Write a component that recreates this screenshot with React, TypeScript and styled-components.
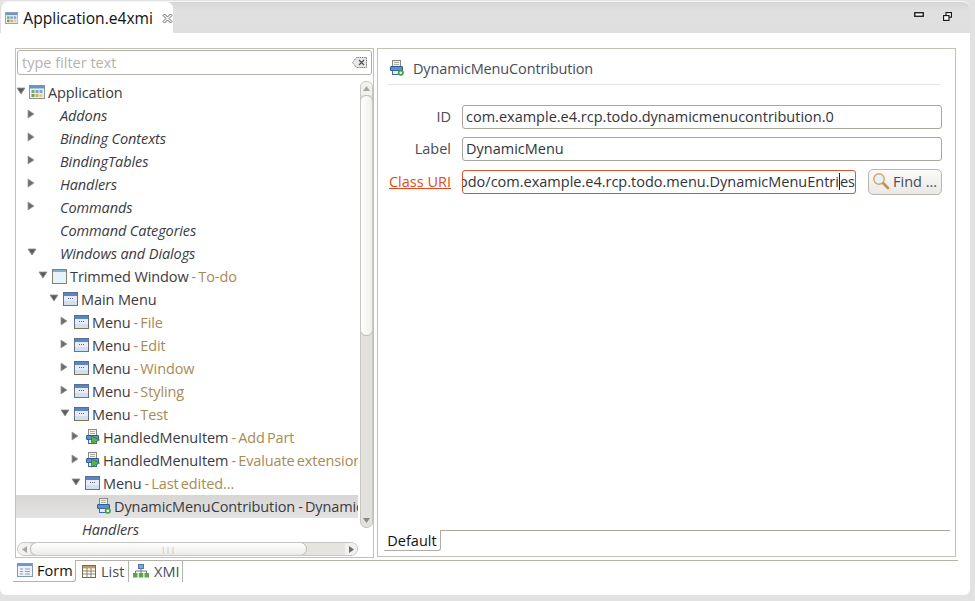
import React from "react";
import styled, { createGlobalStyle } from "styled-components";

const Global = createGlobalStyle`
  html, body { margin: 0; padding: 0; background: #e2e2e2; }
  body { font-family: "Open Sans", "Noto Sans", "Liberation Sans", sans-serif; font-size: 14.5px; color: #33333b; }
  * { box-sizing: border-box; }
`;

const Page = styled.div`
  width: 975px; height: 601px; overflow: hidden; background: #e2e2e2;
  padding: 1px 5px 6px 0; display: flex;
`;
const Editor = styled.div`
  flex: 1; display: flex; flex-direction: column; background: #fff;
  border-radius: 6px 8px 6px 6px; border-top: 1px solid #f4f4f4; overflow: hidden;
`;
const TabStrip = styled.div`
  height: 31px; flex: none; display: flex; align-items: stretch; justify-content: space-between;
  background: linear-gradient(#d6d6d6, #e0e0e0 30%, #dfdfdf);
`;
const EditorTab = styled.div`
  width: 172px; margin-left: 1px; background: #fff; border-radius: 6px 6px 0 0;
  display: flex; align-items: center; padding: 1px 0 0 4px; gap: 5px; font-size: 15.6px; color: #101010;
`;
const CloseBtn = styled.span`margin-left: 4px; display: flex;`;
const WinButtons = styled.div`display: flex; align-items: flex-start; gap: 19px; padding: 10px 18px 0 0;`;

const Body = styled.div`
  flex: 1; min-height: 0; display: flex; flex-direction: column; padding-top: 15px;
`;
const Panes = styled.div`
  height: 510px; flex: none; display: flex; gap: 3px; padding-left: 15px;
`;
const LeftPane = styled.div`
  width: 359px; flex: none; border: 1px solid #c3c0b8; display: flex; flex-direction: column;
`;
const FilterBox = styled.div`
  margin: 1px 0 0 1px; width: 355px; height: 25px; flex: none; border: 1px solid #b3b0a9; border-radius: 3px;
  display: flex; align-items: center; justify-content: space-between; padding: 0 4px 1px; color: #b5b2ad;
`;
const TreeArea = styled.div`
  flex: 1; min-height: 0; margin-top: 6px; display: flex;
`;
const Tree = styled.div`flex: 1; min-width: 0; overflow: hidden;`;
const Row = styled.div<{ $depth: number; $selected?: boolean }>`
  height: 23px; display: flex; align-items: center; white-space: nowrap;
  padding-left: ${(p) => 1 + p.$depth * 11}px;
  background: ${(p) => (p.$selected ? "linear-gradient(#d8d7d5, #e4e3e1)" : "transparent")};
  color: #3a3a42;
`;
const Toggle = styled.span`width: 13px; flex: none; display: flex; margin: -3px 0 0 -1px;`;
const IconSlot = styled.span`width: 19px; flex: none; display: flex; margin-top: -1px;`;
const Name = styled.span<{ $italic?: boolean }>`
  font-style: ${(p) => (p.$italic ? "italic" : "normal")};
  margin-left: ${(p) => (p.$italic ? 1 : 0)}px;
  letter-spacing: -0.1px;
`;
const Deco = styled.span<{ $plain?: boolean }>`
  color: ${(p) => (p.$plain ? "#3a3a42" : "#a78a55")};
  letter-spacing: -0.1px; word-spacing: -1.5px; margin-left: 3px;
`;

const VScroll = styled.div`
  width: 15px; flex: none; background: #fff; padding-left: 2px; display: flex; flex-direction: column;
`;
const VTrack = styled.div`
  height: 447px; background: #e3e1de; border: 1px solid #c8c6c1; border-radius: 6px; display: flex; flex-direction: column; overflow: hidden;
`;
const VCap = styled.div`
  height: 13px; flex: none; display: flex; align-items: center; justify-content: center; background: #f2f1ef;
`;
const VThumb = styled.div`
  height: 241px; flex: none; margin: 0 -1px; border: 1px solid #bdbbb6; border-radius: 6px; background: linear-gradient(90deg, #fff, #f0efed);
`;
const VBottom = styled.div`height: 13px; flex: none; display: flex; align-items: center; justify-content: center;`;
const HScroll = styled.div`
  height: 14px; flex: none; margin: 1px 0 1px 1px; width: 341px; border: 1px solid #c8c6c1; border-radius: 7px;
  background: #e6e4e1; display: flex; align-items: stretch; overflow: hidden;
`;
const HCap = styled.div`width: 12px; flex: none; display: flex; align-items: center; justify-content: center; background: #f2f1ef;`;
const HThumb = styled.div`
  width: 277px; flex: none; margin: -1px 0; border: 1px solid #bdbbb6; border-radius: 7px;
  background: linear-gradient(#fff, #ecebe9); display: flex; align-items: center; justify-content: center;
`;
const HRest = styled.div`flex: 1;`;
const Grip = styled.span`color: #a5a3a0; font-size: 7px; letter-spacing: 1px; line-height: 1;`;

const RightPane = styled.div`
  width: 579px; flex: none; border: 1px solid #c3c0b8; display: flex; flex-direction: column; padding: 0 15px 0 6px;
  margin-bottom: 1px;
`;
const FormHead = styled.div`
  height: 36px; flex: none; margin-left: 4px; display: flex; align-items: center; gap: 9px; border-bottom: 1px solid #e4e4e4;
  color: #4b4b58; padding: 3px 0 0 0; width: 552px; letter-spacing: -0.15px;
`;
const Fields = styled.div`
  margin-top: 20px; display: grid; grid-template-columns: 68px 480px; column-gap: 11px; row-gap: 8px; align-items: center; margin-left: -1px;
`;
const FieldLabel = styled.span`text-align: right; color: #4b4b50; padding-bottom: 2px;`;
const LinkLabel = styled.a`
  text-align: right; color: #e24a1c; text-decoration: underline; justify-self: end; padding-bottom: 1px;
`;
const TextBox = styled.div<{ $error?: boolean }>`
  height: 24px; border: 1px solid ${(p) => (p.$error ? "#d9532c" : "#a9a6a0")}; border-radius: 3px; background: #fff;
  display: flex; align-items: center; padding: 0 ${(p) => (p.$error ? 0 : 3)}px 2px 3px; white-space: nowrap; overflow: hidden; color: #33333b; min-width: 0;
  justify-content: ${(p) => (p.$error ? "flex-end" : "flex-start")};
`;
const UriRow = styled.div`display: flex; align-items: center; justify-content: space-between;`;
const UriBox = styled(TextBox)`width: 394px; flex: none;`;
const Caret = styled.span`display: inline-block; width: 0; height: 17px; border-left: 1px solid #222; vertical-align: -3px;`;
const FindButton = styled.button`
  width: 74px; height: 26px; border: 1px solid #b9b6b0; border-radius: 5px; background: linear-gradient(#fbfbfa, #e9e8e5);
  font: inherit; color: #4b4b58; display: flex; align-items: center; gap: 3px; padding: 0 0 2px 3px; white-space: nowrap;
`;
const Spacer = styled.div`flex: 1;`;
const PageTabs = styled.div`
  height: 21px; flex: none; display: flex; align-items: stretch; margin-bottom: 5px; margin-right: -9px;
`;
const DefaultTab = styled.div`
  width: 57px; border-bottom: 1px solid #b0ada6; border-right: 1px solid #b0ada6; border-radius: 0 0 3px 0; display: flex; align-items: center; justify-content: center; color: #111;
`;
const PageTabRest = styled.div`flex: 1; border-top: 1px solid #aaa79f; margin-right: -1px;`;

const BottomTabs = styled.div`
  margin: 2px 12px 0 13px; height: 22px; flex: none; display: flex; align-items: stretch;
`;
const BottomTab = styled.div<{ $active?: boolean; $w: number; $pad: number; $gap: number }>`
  width: ${(p) => p.$w}px; display: flex; align-items: center; gap: ${(p) => p.$gap}px; padding: 0 0 1px ${(p) => p.$pad}px;
  border-right: 1px solid #b5b2ab; color: ${(p) => (p.$active ? "#111" : "#4b4b58")};
  border-top: ${(p) => (p.$active ? "none" : "1px solid #b5b2ab")};
  border-bottom: ${(p) => (p.$active ? "1px solid #b5b2ab" : "none")};
  border-bottom-right-radius: ${(p) => (p.$active ? 3 : 0)}px;
`;
const BottomRest = styled.div`flex: 1; border-top: 1px solid #b5b2ab;`;

const TriRight = () => (
  <svg width="8" height="10" viewBox="0 0 8 10"><path d="M1 1L7 5L1 9Z" fill="#6c6c6c" stroke="#9a9a9a" strokeWidth=".8" /></svg>
);
const TriDown = () => (
  <svg width="10" height="8" viewBox="0 0 10 8"><path d="M1 1H9L5 7Z" fill="#5c5c5c" stroke="#8e8e8e" strokeWidth=".8" /></svg>
);
const AppIcon = () => (
  <svg width="16" height="14" viewBox="0 0 16 14">
    <rect x=".5" y=".5" width="15" height="13" fill="#e8f0f8" stroke="#7f93a8" />
    <rect x="1" y="1" width="14" height="2.5" fill="#6d93c4" />
    <rect x="2.5" y="5" width="3" height="3" fill="#7fae5c" /><rect x="6.5" y="5" width="3" height="3" fill="#7fa3d8" /><rect x="10.5" y="5" width="3" height="3" fill="#7fa3d8" />
    <rect x="2.5" y="9" width="3" height="3" fill="#6fa84c" /><rect x="6.5" y="9" width="3" height="3" fill="#e0a45a" /><rect x="10.5" y="9" width="3" height="3" fill="#ecd35c" />
  </svg>
);
const WindowIcon = () => (
  <svg width="16" height="15" viewBox="0 0 16 15">
    <rect x="1.5" y=".5" width="14" height="14" fill="#e6f3fb" stroke="#86806f" />
    <rect x="2" y="1" width="13" height="2" fill="#7ab0dc" />
  </svg>
);
const MenuIcon = () => (
  <svg width="16" height="14" viewBox="0 0 16 14">
    <rect x="1.5" y=".5" width="14" height="13" fill="#e9ecf6" stroke="#5a6f90" />
    <rect x="2" y="1" width="13" height="3" fill="#5a86c6" />
    <path d="M6 6.5h5" stroke="#5b6b86" strokeDasharray="1 1" />
    <rect x="2" y="9" width="13" height="4" fill="#cfe0f2" />
    <path d="M1 13.5h15M1 8.5h1M15 8.5h1" stroke="#86734a" />
  </svg>
);
const PrinterBase = () => (
  <>
    <rect x="4.5" y=".5" width="8" height="6" fill="#f2f2ea" stroke="#8a8a80" />
    <path d="M6 2.5h5M6 4.5h5" stroke="#9c9c90" strokeWidth=".8" />
    <rect x="2.5" y="6.5" width="12" height="4" rx=".5" fill="#5f8fce" stroke="#2f5a9a" />
    <rect x="4.5" y="10.5" width="8" height="4" fill="#e4ebf4" stroke="#3f6aa4" />
  </>
);
const HandledIcon = () => (
  <svg width="16" height="16" viewBox="0 0 16 16">
    <PrinterBase />
    <path d="M7.5 7L15.5 11L7.5 15Z" fill="#5cb04a" stroke="#2f7d38" strokeWidth=".8" />
  </svg>
);
const DynamicIcon = () => (
  <svg width="16" height="16" viewBox="0 0 16 16">
    <PrinterBase />
    <circle cx="12.8" cy="12.8" r="2.2" fill="#fff" stroke="#3f9a4a" strokeWidth="1.6" />
  </svg>
);
const CloseIcon = () => (
  <svg width="11" height="11" viewBox="0 0 11 11">
    <path d="M1 2.5L2.5 1L5.5 4L8.5 1L10 2.5L7 5.5L10 8.5L8.5 10L5.5 7L2.5 10L1 8.5L4 5.5Z" fill="#fff" stroke="#555" strokeWidth=".9" />
  </svg>
);
const MinIcon = () => (
  <svg width="10" height="5" viewBox="0 0 10 5"><rect x=".75" y=".75" width="8.5" height="3.5" fill="#fff" stroke="#111" strokeWidth="1.3" /></svg>
);
const RestoreIcon = () => (
  <svg width="9" height="9" viewBox="0 0 9 9">
    <rect x="3" y=".6" width="5.4" height="4.6" fill="#fff" stroke="#111" strokeWidth="1.1" />
    <rect x=".6" y="3.6" width="5.4" height="4.8" fill="#fff" stroke="#111" strokeWidth="1.1" />
  </svg>
);
const ClearIcon = () => (
  <svg width="15" height="11" viewBox="0 0 15 11">
    <path d="M4.5 .5H14.5V10.5H4.5L.5 5.5Z" fill="#e8e8e8" stroke="#666" strokeDasharray="1 .8" />
    <path d="M7 3L12 8M12 3L7 8" stroke="#555" strokeWidth="1.3" />
  </svg>
);
const MagIcon = () => (
  <svg width="18" height="18" viewBox="0 0 18 18">
    <path d="M10.5 10.5L16 16" stroke="#c98f45" strokeWidth="2.6" strokeLinecap="round" />
    <circle cx="7" cy="7" r="5.2" fill="#e9f1f6" stroke="#cfa56a" strokeWidth="1.4" />
  </svg>
);
const FormIcon = () => (
  <svg width="16" height="14" viewBox="0 0 16 14">
    <rect x=".5" y=".5" width="15" height="13" fill="#eef2f8" stroke="#7e97bb" />
    <rect x="1" y="1" width="14" height="2" fill="#6f97cc" />
    <path d="M3 6h3M3 8.5h3M3 11h3M8 6h5M8 8.5h5M8 11h5" stroke="#8aa0bd" />
  </svg>
);
const ListIcon = () => (
  <svg width="14" height="13" viewBox="0 0 14 13">
    <rect x=".5" y=".5" width="13" height="12" fill="#fff" stroke="#7d6a48" />
    <rect x="1" y="1" width="12" height="2.4" fill="#c39a5e" />
    <path d="M1 6h12M1 9h12M5 3v9M9 3v9" stroke="#8a8470" />
  </svg>
);
const XmiIcon = () => (
  <svg width="16" height="14" viewBox="0 0 16 14">
    <rect x="5.5" y=".5" width="5" height="4" fill="#7fa6d8" stroke="#4e77ad" />
    <path d="M8 4.5V7M2.5 9V7H13.5V9M8 7V9" stroke="#777" fill="none" />
    <rect x="0" y="9" width="4.5" height="4.5" fill="#5aa646" /><rect x="5.8" y="9" width="4.5" height="4.5" fill="#5aa646" /><rect x="11.5" y="9" width="4.5" height="4.5" fill="#5aa646" />
  </svg>
);

type Node = { depth: number; toggle?: "r" | "d"; icon?: React.ReactNode; name: string; deco?: string; italic?: boolean; selected?: boolean };

const rows: Node[] = [
  { depth: 0, toggle: "d", icon: <AppIcon />, name: "Application" },
  { depth: 1, toggle: "r", name: "Addons", italic: true },
  { depth: 1, toggle: "r", name: "Binding Contexts", italic: true },
  { depth: 1, toggle: "r", name: "BindingTables", italic: true },
  { depth: 1, toggle: "r", name: "Handlers", italic: true },
  { depth: 1, toggle: "r", name: "Commands", italic: true },
  { depth: 1, name: "Command Categories", italic: true },
  { depth: 1, toggle: "d", name: "Windows and Dialogs", italic: true },
  { depth: 2, toggle: "d", icon: <WindowIcon />, name: "Trimmed Window", deco: "- To-do" },
  { depth: 3, toggle: "d", icon: <MenuIcon />, name: "Main Menu" },
  { depth: 4, toggle: "r", icon: <MenuIcon />, name: "Menu", deco: "- File" },
  { depth: 4, toggle: "r", icon: <MenuIcon />, name: "Menu", deco: "- Edit" },
  { depth: 4, toggle: "r", icon: <MenuIcon />, name: "Menu", deco: "- Window" },
  { depth: 4, toggle: "r", icon: <MenuIcon />, name: "Menu", deco: "- Styling" },
  { depth: 4, toggle: "d", icon: <MenuIcon />, name: "Menu", deco: "- Test" },
  { depth: 5, toggle: "r", icon: <HandledIcon />, name: "HandledMenuItem", deco: "- Add Part" },
  { depth: 5, toggle: "r", icon: <HandledIcon />, name: "HandledMenuItem", deco: "- Evaluate extension" },
  { depth: 5, toggle: "d", icon: <MenuIcon />, name: "Menu", deco: "- Last edited..." },
  { depth: 6, icon: <DynamicIcon />, name: "DynamicMenuContribution", deco: "- Dynamic", selected: true },
  { depth: 3, name: "Handlers", italic: true },
];

export default function App() {
  return (
    <Page>
      <Global />
      <Editor>
        <TabStrip>
          <EditorTab>
            <AppIcon />
            <span>Application.e4xmi</span>
            <CloseBtn><CloseIcon /></CloseBtn>
          </EditorTab>
          <WinButtons>
            <MinIcon />
            <RestoreIcon />
          </WinButtons>
        </TabStrip>
        <Body>
          <Panes>
            <LeftPane>
              <FilterBox>
                <span>type filter text</span>
                <ClearIcon />
              </FilterBox>
              <TreeArea>
                <Tree>
                  {rows.map((r, i) => (
                    <Row key={i} $depth={r.depth} $selected={r.selected}>
                      <Toggle>{r.toggle === "r" ? <TriRight /> : r.toggle === "d" ? <TriDown /> : null}</Toggle>
                      <IconSlot>{r.icon}</IconSlot>
                      <Name $italic={r.italic}>{r.name}</Name>
                      {r.deco ? <Deco $plain={r.selected}>{r.deco}</Deco> : null}
                    </Row>
                  ))}
                </Tree>
                <VScroll>
                  <VTrack>
                    <VCap>
                      <svg width="7" height="5" viewBox="0 0 7 5"><path d="M0 5L3.5 0L7 5Z" fill="#a9a7a3" /></svg>
                    </VCap>
                    <VThumb />
                    <Spacer />
                    <VBottom>
                      <svg width="7" height="5" viewBox="0 0 7 5"><path d="M0 0L3.5 5L7 0Z" fill="#8c8a86" /></svg>
                    </VBottom>
                  </VTrack>
                </VScroll>
              </TreeArea>
              <HScroll>
                <HCap><svg width="5" height="7" viewBox="0 0 5 7"><path d="M5 0L0 3.5L5 7Z" fill="#a9a7a3" /></svg></HCap>
                <HThumb><Grip>|||</Grip></HThumb>
                <HRest />
                <HCap><svg width="5" height="7" viewBox="0 0 5 7"><path d="M0 0L5 3.5L0 7Z" fill="#6f6d6a" /></svg></HCap>
              </HScroll>
            </LeftPane>
            <RightPane>
              <FormHead>
                <DynamicIcon />
                <span>DynamicMenuContribution</span>
              </FormHead>
              <Fields>
                <FieldLabel>ID</FieldLabel>
                <TextBox>com.example.e4.rcp.todo.dynamicmenucontribution.0</TextBox>
                <FieldLabel>Label</FieldLabel>
                <TextBox>DynamicMenu</TextBox>
                <LinkLabel>Class URI</LinkLabel>
                <UriRow>
                  <UriBox $error>
                    <span>bundleclass://com.example.e4.rcp.todo/com.example.e4.rcp.todo.menu.DynamicMenuEntri<Caret />es</span>
                  </UriBox>
                  <FindButton><MagIcon /><span>Find ...</span></FindButton>
                </UriRow>
              </Fields>
              <Spacer />
              <PageTabs>
                <DefaultTab>Default</DefaultTab>
                <PageTabRest />
              </PageTabs>
            </RightPane>
          </Panes>
          <BottomTabs>
            <BottomTab $active $w={63} $pad={4} $gap={4}><FormIcon />Form</BottomTab>
            <BottomTab $w={53} $pad={6} $gap={5}><ListIcon />List</BottomTab>
            <BottomTab $w={54} $pad={4} $gap={5}><XmiIcon />XMI</BottomTab>
            <BottomRest />
          </BottomTabs>
        </Body>
      </Editor>
    </Page>
  );
}
